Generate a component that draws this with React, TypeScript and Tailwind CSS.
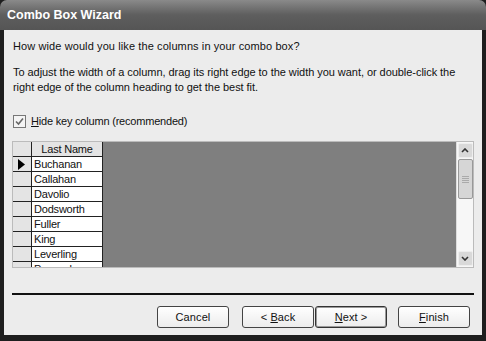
const NAMES = ['Buchanan', 'Callahan', 'Davolio', 'Dodsworth', 'Fuller', 'King', 'Leverling', 'Peacock'];

function Btn({ children, pressed }: { children: React.ReactNode; pressed?: boolean }) {
  return (
    <button
      className={
        'h-[22px] w-[72px] rounded-[3px] border bg-gradient-to-b from-white to-[#ececec] text-[11px] text-[#111] ' +
        (pressed ? 'border-[#333] shadow-[inset_0_0_0_1px_#9a9a9a]' : 'border-[#444]')
      }
    >
      {children}
    </button>
  );
}

export default function App() {
  return (
    <div
      className="w-[486px] h-[341px] bg-[#1e1e1e] flex flex-col overflow-hidden"
      style={{ fontFamily: '"Liberation Sans", Arial, sans-serif' }}
    >
      {/* title bar */}
      <div className="h-[30px] shrink-0 rounded-t-[7px] bg-gradient-to-b from-[#8a8a8a] via-[#5e5e5e] to-[#555] flex items-center pl-[7px]">
        <span className="text-white font-bold text-[12.5px]">Combo Box Wizard</span>
      </div>

      {/* body */}
      <div className="flex-1 mx-[4px] mb-[6px] bg-[#ececec] flex flex-col px-[8px] text-[11px] tracking-[0.1px] text-[#111]">
        <div className="mt-[9px] ml-px leading-[15px]">How wide would you like the columns in your combo box?</div>
        <div className="mt-[11px] ml-px -mr-[4px] leading-[15px] tracking-[-0.05px]">
          To adjust the width of a column, drag its right edge to the width you want, or double-click the right edge of the column heading to get the best fit.
        </div>

        <label className="mt-[19px] ml-px flex items-center gap-[5px] leading-[15px]">
          <span className="w-[13px] h-[13px] border border-[#777] bg-[#f4f4f4] flex items-center justify-center">
            <svg width="9" height="9" viewBox="0 0 9 9">
              <path d="M1 4.5 L3.5 7 L8 1.5" fill="none" stroke="#666" strokeWidth="1.6" />
            </svg>
          </span>
          <span className="tracking-[-0.2px]">
            <u>H</u>ide key column (recommended)
          </span>
        </label>

        {/* datasheet */}
        <div className="mt-[12px] h-[127px] border border-[#bbb] flex overflow-hidden tracking-[-0.2px]">
          <div className="w-[90px] shrink-0 flex flex-col bg-[#7f7f7f]">
            <div className="flex h-[15px] shrink-0">
              <div className="w-[19px] bg-[#e4e4e4] border-r border-b border-[#222]" />
              <div className="flex-1 bg-[#e4e4e4] border-r border-b border-[#222] text-center leading-[14px]">Last Name</div>
            </div>
            {NAMES.map((n, i) => (
              <div key={n} className="flex h-[15px] shrink-0">
                <div className="w-[19px] bg-[#e4e4e4] border-r border-b border-[#222] flex items-center pl-[5px]">
                  {i === 0 && (
                    <svg width="7" height="11" viewBox="0 0 7 11">
                      <path d="M0 0 L7 5.5 L0 11 Z" fill="#000" />
                    </svg>
                  )}
                </div>
                <div className="flex-1 bg-white border-r border-b border-[#222] pl-[2px] leading-[14px]">{n}</div>
              </div>
            ))}
          </div>
          <div className="flex-1 bg-[#7f7f7f]" />
          {/* scrollbar */}
          <div className="w-[17px] shrink-0 bg-[#f7f7f7] flex flex-col items-center border-l border-[#ddd]">
            <div className="w-[15px] h-[15px] mt-[1px] rounded-[2px] bg-[#d9d9d9] border border-[#eee] flex items-center justify-center">
              <svg width="8" height="5" viewBox="0 0 8 5">
                <path d="M1 4 L4 1 L7 4" fill="none" stroke="#333" strokeWidth="1.6" />
              </svg>
            </div>
            <div className="w-[15px] h-[40px] mt-[1px] rounded-[2px] bg-[#d6d6d6] border border-[#999] flex flex-col items-center justify-center gap-[1px]">
              <div className="w-[7px] h-px bg-[#aaa]" />
              <div className="w-[7px] h-px bg-[#aaa]" />
              <div className="w-[7px] h-px bg-[#aaa]" />
              <div className="w-[7px] h-px bg-[#aaa]" />
            </div>
            <div className="flex-1" />
            <div className="w-[15px] h-[15px] mb-[1px] rounded-[2px] bg-[#d9d9d9] border border-[#eee] flex items-center justify-center">
              <svg width="8" height="5" viewBox="0 0 8 5">
                <path d="M1 1 L4 4 L7 1" fill="none" stroke="#333" strokeWidth="1.6" />
              </svg>
            </div>
          </div>
        </div>

        <div className="mt-[25px] h-[2px] bg-[#111]" />

        <div className="mt-[11px] flex justify-end">
          <Btn>Cancel</Btn>
          <div className="w-[13px]" />
          <Btn>
            &lt; <u>B</u>ack
          </Btn>
          <div className="w-[1px]" />
          <Btn pressed>
            <u>N</u>ext &gt;
          </Btn>
          <div className="w-[11px]" />
          <Btn>
            <u>F</u>inish
          </Btn>
          <div className="w-[4px]" />
        </div>
      </div>
    </div>
  );
}
